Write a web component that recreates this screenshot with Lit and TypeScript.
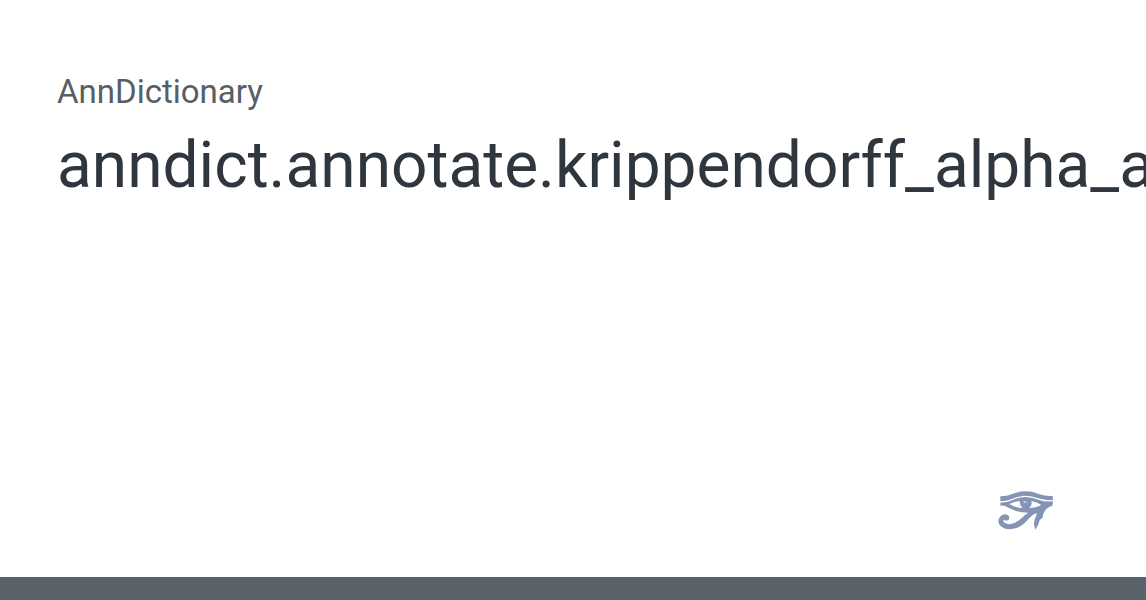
import { LitElement, html, css } from "lit";
import { customElement } from "lit/decorators.js";

@customElement("app-root")
export class AppRoot extends LitElement {
  static styles = css`
    :host { display: flex; flex-direction: column; min-height: 100vh; box-sizing: border-box; overflow: hidden; background: #fff; font-family: Roboto, sans-serif; border-bottom: 23px solid #5a626b; }
    main { flex: 1; padding: 72px 57px 0; }
    .site { margin: 0; font-size: 33px; line-height: 40px; color: #585e65; }
    h1 { margin: 16px 0 0; font-size: 64px; line-height: 76px; font-weight: 400; color: #2f363d; white-space: nowrap; }
    footer { display: flex; justify-content: flex-end; padding: 0 92px 46px; }
    svg { display: block; width: 57px; height: 40px; }
  `;
  render() {
    return html`<main><p class="site">AnnDictionary</p><h1>anndict.annotate.krippendorff_alpha_adata</h1></main>
      <footer>
        <svg viewBox="21 18 171 120" role="img" aria-label="Eye of Horus" fill="#8494b4">
          <path d="M31 34Q51 34 67 27Q86 19 108 19Q126 19 144 26Q164 34 188 33L189 45Q164 47 143 39Q122 32 102 32Q84 34 66 42Q49 49 31 49Z" />
          <path fill-rule="evenodd" d="M31 53Q51 53 69 45Q87 36 106 36Q127 36 145 44Q166 52 189 49L187 62Q177 64 169 72Q160 82 158 92L159 95L154 102Q149 102 148 108Q146 121 136 134L132 120Q131 108 137 96Q141 88 140 84Q129 87 118 99Q99 122 82 128Q63 135 45 131Q27 125 25 109Q26 95 38 89Q50 86 56 93Q60 101 54 106Q48 108 43 104Q38 107 42 112Q49 119 62 117Q80 114 96 98Q106 88 115 83Q94 83 76 77Q58 70 45 63Q38 61 31 62ZM58 57Q72 67 98 69Q88 60 89 48Q73 50 58 57ZM124 48Q128 61 117 69Q138 69 154 60Q141 51 124 48Z" />
          <path d="M101 47Q99 51 104 53Q109 54 112 51Q107 50 101 47Z" fill="#d4dae6" />
        </svg>
      </footer>`;
  }
}
